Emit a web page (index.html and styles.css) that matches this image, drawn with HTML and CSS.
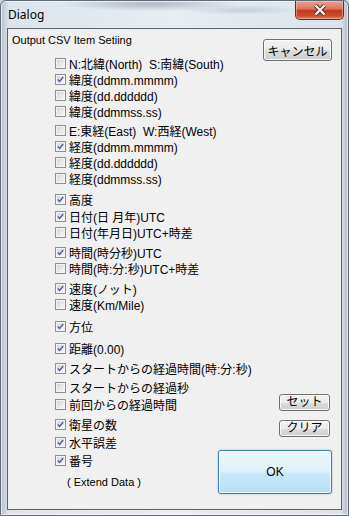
FILE: index.html
```html
<!DOCTYPE html>
<html lang="ja">
<head>
  <meta charset="UTF-8">
  <title>Dialog</title>
  <link rel="stylesheet" href="styles.css">
</head>
<body>

  <div class="window">
    <div class="titlebar">
      <span class="title">Dialog</span>
      <div class="close">
        <svg width="14" height="12" viewBox="0 0 14 12">
          <path class="x-back" d="M2.5 1.5l9 9M11.5 1.5l-9 9"/>
          <path class="x-front" d="M2.5 1.5l9 9M11.5 1.5l-9 9"/>
        </svg>
      </div>
    </div>

    <div class="client">
      <div class="items">
        <div class="caption">Output CSV Item Setiing</div>
        <div class="list">
          <div class="row"><span class="box"></span>N:北緯(North)&nbsp; S:南緯(South)</div>
          <div class="row"><span class="box on"><svg viewBox="0 0 11 11"><path d="M2.2 5.6l2.2 2.3L8.8 2.4"/></svg></span>緯度(ddmm.mmmm)</div>
          <div class="row"><span class="box"></span>緯度(dd.dddddd)</div>
          <div class="row"><span class="box"></span>緯度(ddmmss.ss)</div>

          <div class="row m3"><span class="box"></span>E:東経(East)&nbsp; W:西経(West)</div>
          <div class="row"><span class="box on"><svg viewBox="0 0 11 11"><path d="M2.2 5.6l2.2 2.3L8.8 2.4"/></svg></span>経度(ddmm.mmmm)</div>
          <div class="row"><span class="box"></span>経度(dd.dddddd)</div>
          <div class="row"><span class="box"></span>経度(ddmmss.ss)</div>

          <div class="row m5"><span class="box on"><svg viewBox="0 0 11 11"><path d="M2.2 5.6l2.2 2.3L8.8 2.4"/></svg></span>高度</div>
          <div class="row m1"><span class="box on"><svg viewBox="0 0 11 11"><path d="M2.2 5.6l2.2 2.3L8.8 2.4"/></svg></span>日付(日 月年)UTC</div>
          <div class="row"><span class="box"></span>日付(年月日)UTC+時差</div>

          <div class="row m4"><span class="box on"><svg viewBox="0 0 11 11"><path d="M2.2 5.6l2.2 2.3L8.8 2.4"/></svg></span>時間(時分秒)UTC</div>
          <div class="row"><span class="box"></span>時間(時:分:秒)UTC+時差</div>

          <div class="row m4"><span class="box on"><svg viewBox="0 0 11 11"><path d="M2.2 5.6l2.2 2.3L8.8 2.4"/></svg></span>速度(ノット)</div>
          <div class="row"><span class="box"></span>速度(Km/Mile)</div>

          <div class="row m6"><span class="box on"><svg viewBox="0 0 11 11"><path d="M2.2 5.6l2.2 2.3L8.8 2.4"/></svg></span>方位</div>
          <div class="row m6"><span class="box on"><svg viewBox="0 0 11 11"><path d="M2.2 5.6l2.2 2.3L8.8 2.4"/></svg></span>距離(0.00)</div>
          <div class="row m4"><span class="box on"><svg viewBox="0 0 11 11"><path d="M2.2 5.6l2.2 2.3L8.8 2.4"/></svg></span>スタートからの経過時間(時:分:秒)</div>
          <div class="row m3"><span class="box"></span>スタートからの経過秒</div>
          <div class="row m1"><span class="box"></span>前回からの経過時間</div>
          <div class="row m4"><span class="box on"><svg viewBox="0 0 11 11"><path d="M2.2 5.6l2.2 2.3L8.8 2.4"/></svg></span>衛星の数</div>
          <div class="row m2"><span class="box on"><svg viewBox="0 0 11 11"><path d="M2.2 5.6l2.2 2.3L8.8 2.4"/></svg></span>水平誤差</div>
          <div class="row m2"><span class="box on"><svg viewBox="0 0 11 11"><path d="M2.2 5.6l2.2 2.3L8.8 2.4"/></svg></span>番号</div>

          <div class="row note">( Extend Data )</div>
        </div>
      </div>

      <div class="actions">
        <button class="btn cancel">キャンセル</button>
        <button class="btn small set">セット</button>
        <button class="btn small clear">クリア</button>
        <button class="btn ok">OK</button>
      </div>
    </div>
  </div>

</body>
</html>
```

FILE: styles.css
```css
body {
  margin: 0;
  width: 349px;
  height: 516px;
  overflow: hidden;
  font-family: "Liberation Sans", "Noto Sans CJK JP", sans-serif;
  background: #cdd6df;
}

.window {
  box-sizing: border-box;
  width: 349px;
  height: 516px;
  border: 1px solid #5f6b78;
  border-radius: 6px 6px 0 0;
  background:
    radial-gradient(ellipse 90px 7px at 150px 3px, rgba(80, 88, 98, 0.35), transparent),
    radial-gradient(ellipse 60px 5px at 240px 9px, rgba(120, 128, 138, 0.25), transparent),
    linear-gradient(to right, #b9c2cb, #dce4ec 8px, #e6edf3 50%, #dbe3eb calc(100% - 8px), #b6bfc8),
    #dbe3eb;
  box-shadow: inset 0 0 0 1px rgba(255, 255, 255, 0.6);
  padding: 0 6px;
}

.titlebar {
  height: 27px;
  display: flex;
  align-items: flex-start;
  justify-content: space-between;
}

.title {
  font-family: "Noto Sans", sans-serif;
  font-size: 12px;
  line-height: 14px;
  margin: 7px 0 0 1px;
  color: #000;
}

.close {
  width: 47px;
  height: 18px;
  margin-right: -2px;
  border: 1px solid #6a2b1f;
  border-top: none;
  border-radius: 0 0 5px 5px;
  background: linear-gradient(#e9a493, #d9745e 45%, #c2391d 52%, #cc4a2c 80%, #e07a5a);
  box-shadow: inset 0 0 0 1px rgba(255, 210, 195, 0.45);
  display: flex;
  align-items: center;
  justify-content: center;
}

.x-back {
  stroke: #5a2a22;
  stroke-width: 4;
  fill: none;
}

.x-front {
  stroke: #fff;
  stroke-width: 2.2;
  fill: none;
}

.client {
  box-sizing: border-box;
  height: 482px;
  border: 1px solid #5b646d;
  background: #f0f0f0;
  display: flex;
}

.items {
  flex: 1;
  min-width: 0;
}

.caption {
  font-size: 11px;
  line-height: 16px;
  margin: 3px 0 0 4px;
  color: #000;
}

.list {
  margin-top: 7px;
  padding-left: 47px;
}

.row {
  height: 16px;
  display: flex;
  align-items: center;
  font-size: 12px;
  color: #000;
  white-space: nowrap;
}

.m1 { margin-top: 1px; }
.m2 { margin-top: 2px; }
.m3 { margin-top: 3px; }
.m4 { margin-top: 4px; }
.m5 { margin-top: 5px; }
.m6 { margin-top: 6px; }

.box {
  box-sizing: border-box;
  width: 11px;
  height: 11px;
  margin-right: 3px;
  flex: none;
  border: 1px solid #8e8f8f;
  background: linear-gradient(135deg, #cfd2d6, #eeeeee 70%, #f8f8f8);
  box-shadow: inset 0 0 0 1px #f4f4f4;
}

.box svg {
  display: block;
  width: 9px;
  height: 9px;
}

.box path {
  fill: none;
  stroke: #4a5f97;
  stroke-width: 1.7;
}

.note {
  margin-top: 6px;
  padding-left: 12px;
  font-size: 11px;
}

.actions {
  flex: none;
  width: 114px;
  display: flex;
  flex-direction: column;
  align-items: flex-end;
  padding: 10px 9px 15px 0;
}

.btn {
  box-sizing: border-box;
  flex: none;
  font-family: "Liberation Sans", "Noto Sans CJK JP", sans-serif;
  font-size: 12px;
  color: #000;
  border: 1px solid #707070;
  border-radius: 3px;
  background: linear-gradient(#f2f2f2, #ebebeb 50%, #dddddd 50%, #cfcfcf);
  box-shadow: inset 0 0 0 1px rgba(255, 255, 255, 0.8);
  padding: 0;
}

.cancel {
  width: 69px;
  height: 22px;
}

.small {
  width: 51px;
  height: 17px;
  margin-right: 2px;
  line-height: 15px;
}

.set {
  margin-top: auto;
}

.clear {
  margin-top: 9px;
}

.ok {
  width: 114px;
  height: 44px;
  margin-top: 13px;
  border-color: #3c7fb1;
  background: linear-gradient(#e8f6fd, #dff2fc 50%, #c9e9fa 52%, #b8def3);
  box-shadow: inset 0 0 0 1px rgba(255, 255, 255, 0.7), 0 0 2px rgba(60, 127, 177, 0.5);
}
```
